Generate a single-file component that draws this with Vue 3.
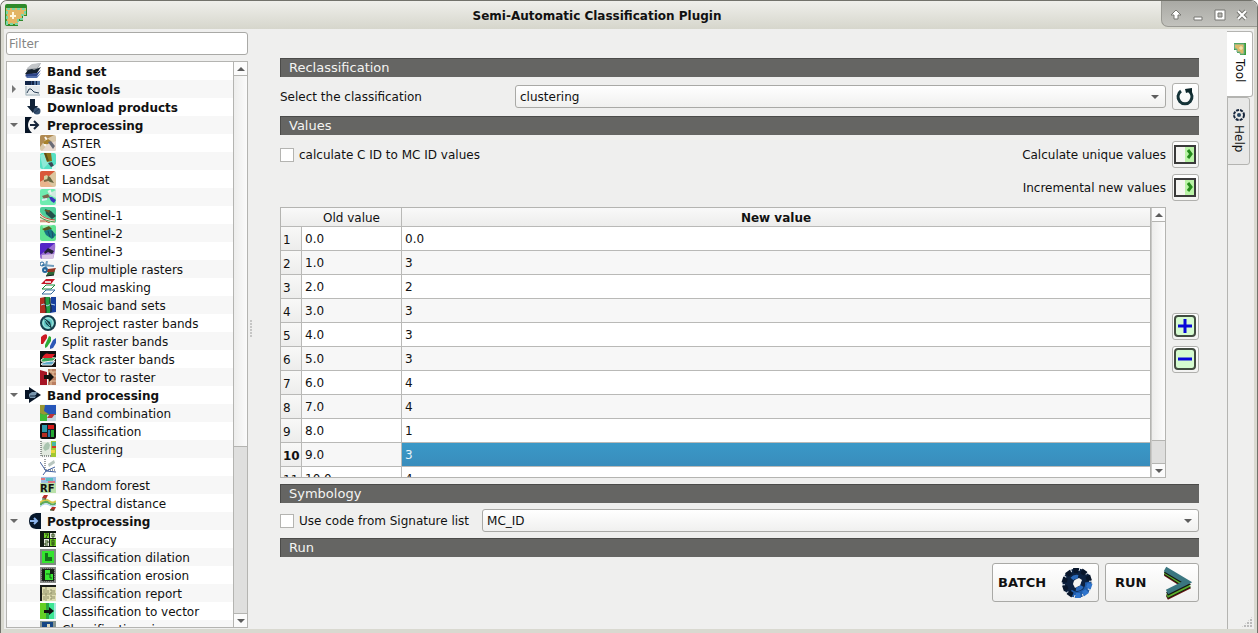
<script setup>
import { ref, computed } from 'vue'

const glyphs = {
  bandset: '<path d="M1 7L6 2L16 0L12 7L3 9Z" fill="#8f9499"/><path d="M2 5L7 1L16 0L12 5L4 6Z" fill="#c3c6c9"/><path d="M0 11L3 7L7 6L9 7L16 4L12 10L2 12Z" fill="#14202e"/><path d="M0 13L2 11L12 10L16 7L12 13L2 14Z" fill="#2c4488"/><path d="M1 15L3 13L12 13L16 10L12 15Z" fill="#5470ad"/>',
  basic: '<path d="M0 0H15V4H0Z" fill="#122447"/><path d="M9 0H11V4H9Z" fill="#4a6a96"/><path d="M6 0H7V4H6Z" fill="#34517c"/><path d="M12 0H15V4H12Z" fill="#5b7ba6"/><path d="M0 5H15V15H0Z" fill="#e6ebee"/><path d="M1 5V14H15" fill="none" stroke="#9fb0b8"/><path d="M2 12L4 8L6 8L9 11L14 12" fill="none" stroke="#2b4056"/>',
  download: '<path d="M5 0H10V7H13L8 14L2 7H5Z" fill="#112338"/><circle cx="12" cy="12" r="3.5" fill="#35506f"/><path d="M9 14L14 10" stroke="#1b3150"/>',
  preprocess: '<path d="M0 0H7Q3 4 3 8T7 16H0Z" fill="#071426"/><path d="M5 8H12M9 4L13 8L9 12" fill="none" stroke="#16253a" stroke-width="2"/>',
  bandproc: '<path d="M0 3H4V0L16 8L4 16V12H0Z" fill="#071426"/><path d="M4 7L7 5H12L10 11H5L4 9Z" fill="#7895ad"/><path d="M5 9H10L12 7" fill="none" stroke="#172b42"/>',
  postprocess: '<path d="M16 0V16H11Q4 15 4 8T11 0Z" fill="#07182c"/><path d="M5 8H12M9 5L12 8L9 11" fill="none" stroke="#8cb5ed" stroke-width="2"/>',
  aster: '<rect width="16" height="16" rx="2" fill="#d9c8aa"/><path d="M0 2Q0 0 2 0H14L5 5L0 12Z" fill="#b08a52"/><path d="M2 16L8 9L16 6V14Q16 16 14 16Z" fill="#e9d9cf"/><path d="M5 2L7 5M4 9L6 11" stroke="#f8f5ee" stroke-width="2"/><path d="M3 7L8 4L11 6L8 9L4 9Z" fill="#a8822d"/><path d="M8 7L11 6L15 11L13 14Z" fill="#6a6c76"/>',
  goes: '<rect width="16" height="16" rx="2" fill="#57e0c3"/><path d="M0 2L6 0L9 10L3 16Z" fill="#8ee9d6"/><path d="M4 0H11L12 8L7 9Z" fill="#8d7018"/><path d="M5 0L8 8" stroke="#5d4d16" stroke-width="2"/><path d="M8 10L12 9L14 13L11 14Z" fill="#3c4554"/><path d="M12 14L16 11V16H12Z" fill="#e8f5f2"/>',
  landsat: '<rect width="16" height="16" rx="2" fill="#dcc6a0"/><path d="M0 2Q0 0 2 0H15L8 6L0 11Z" fill="#d9593a"/><path d="M0 11L6 9L13 16H2Q0 16 0 14Z" fill="#eab48d"/><path d="M4 5L7 4L9 7L8 10L4 9Z" fill="#d4d3a2"/><path d="M8 5L10 6L14 12L10 11L7 9Z" fill="#66663f"/><path d="M4 10L8 9" stroke="#786842" stroke-width="2"/>',
  modis: '<rect width="16" height="16" rx="2" fill="#6fecb0"/><path d="M8 5L16 1V9Z" fill="#cfeadf"/><path d="M2 7L8 5L10 8L4 10Z" fill="#7c684e"/><path d="M8 3L10 2L11 5" fill="none" stroke="#e8f2ed" stroke-width="2"/><path d="M9 8L12 8L16 11L14 14L11 12Z" fill="#3a35bd"/><path d="M2 11L7 10" stroke="#d9ecf2" stroke-width="2"/>',
  sentinel1: '<rect width="16" height="16" rx="2" fill="#4fcf9a"/><path d="M0 5Q3 11 15 13V16H0Z" fill="#efe3cc"/><path d="M0 7Q4 12 15 13M0 14Q6 13 10 16" fill="none" stroke="#b8503c"/><path d="M0 10Q5 14 15 15" fill="none" stroke="#4a9a4e"/><path d="M5 2L11 4L16 9L12 12L6 7Z" fill="#24504a"/><path d="M4 3L10 3L9 6Z" fill="#6a5a2a"/>',
  sentinel2: '<rect width="16" height="16" rx="2" fill="#5fe392"/><path d="M2 0H13L4 5Z" fill="#98f0b6"/><path d="M2 4L9 1L12 4L5 6Z" fill="#58581e"/><path d="M4 6L11 4L16 10L12 14L6 10Z" fill="#167683"/><path d="M8 6L10 12M12 6L13 13" stroke="#1b4e68"/>',
  sentinel3: '<path d="M2 0H15Q16 7 13 16H2Q0 16 0 14V2Q0 0 2 0Z" fill="#9a6fd2"/><path d="M2 0H15L9 5L0 12V2Q0 0 2 0Z" fill="#5426c6"/><path d="M2 12L14 11L13 16H2Z" fill="#d8c4e4"/><path d="M4 9L8 5L14 8L12 11L8 9L5 11Z" fill="#242238"/>',
  clip: '<path d="M2 4L14 5M7 0L5 9" stroke="#6f9cbd" stroke-width="2"/><circle cx="2" cy="3" r="2" fill="none" stroke="#24669b"/><circle cx="5" cy="9" r="2" fill="none" stroke="#24669b" stroke-width="2"/><path d="M8 11L15 9L14 14L6 15Z" fill="#2b6838"/><path d="M8 8L16 7L14 11H7Z" fill="#953423"/><path d="M6 15L14 14" stroke="#131c20"/>',
  cloud: '<path d="M1 5L6 0H15L11 5Z" fill="#c51627"/><path d="M5 3H11" stroke="#f0ced0" stroke-width="2"/><path d="M2 10L6 6H15L11 10Z" fill="#fff" stroke="#188a3b"/><path d="M2 15L6 11H15L11 15Z" fill="#fff" stroke="#366c9b"/>',
  mosaic: '<path d="M0 1L5 0L6 6V16H0Z" fill="#b22d22"/><path d="M5 0H10L11 16H6Z" fill="#229e44"/><path d="M11 0H16V15L10 16Z" fill="#163e9d"/><path d="M1 8L4 7L7 9L11 7L15 8" stroke="#b4d7ee" fill="none"/><path d="M5 0V6L6 12V16M10 1V6L11 10V15" stroke="#1a231c" fill="none"/>',
  reproject: '<circle cx="8" cy="8" r="7" fill="#61c7c5" stroke="#173d4b" stroke-width="2"/><circle cx="8" cy="8" r="5" fill="none" stroke="#ade9de"/><path d="M4 3L10 7L12 14L6 9Z" fill="#123943"/><path d="M5 5L10 11" stroke="#6bd4cd"/>',
  split: '<path d="M1 4Q5 0 7 2V5L3 11H1Z" fill="#cc1823"/><path d="M5 12L9 3L11 4V8L7 14L5 15Z" fill="#2dab38"/><path d="M10 13L13 7L16 5V10L13 15L10 16Z" fill="#2c57b6"/>',
  stack: '<rect width="16" height="16" fill="#111"/><path d="M1 9L5 6L16 7L12 11H2Z" fill="#39a65a" stroke="#e4eddb"/><path d="M2 7Q5 1 9 3H15L12 7H2Z" fill="#df1d25"/><path d="M1 13Q5 10 15 10L12 14H2Z" fill="#5ba7c9" stroke="#eee"/>',
  vector: '<path d="M0 1L7 3V16H0Z" fill="#a61525"/><path d="M8 0H16V16H8Z" fill="#bb8063"/><path d="M8 3H16M8 7H16M8 12H16M11 0V3M13 3V7M11 12V16" stroke="#e7c49f"/><path d="M4 6H9V3L14 8L9 13V10H4Z" fill="#101010"/>',
  combination: '<rect width="16" height="16" fill="#4a9740"/><path d="M0 0H5V4L11 7L4 10L0 8Z" fill="#989733"/><path d="M5 0H16V9L10 10L4 6Z" fill="#2656b9"/><path d="M0 9L7 10V16H0Z" fill="#40bb36"/><path d="M7 10H16V16H7Z" fill="#c3d5df"/><path d="M7 13L10 9H15L12 13Z" fill="#bc343b"/>',
  classification: '<rect x="1" y="1" width="14" height="14" rx="1" fill="#132228" stroke="#111" stroke-width="2"/><path d="M2 2H7V9H2Z" fill="#2e9aa8"/><path d="M8 2H14V6H8Z" fill="#d61919"/><path d="M2 10H7V14H2Z" fill="#b82e22"/><path d="M8 7H10V14H8Z" fill="#2976a9"/><path d="M11 7H14V14H11Z" fill="#26a933"/>',
  clustering: '<rect x="1" y="1" width="14" height="14" fill="#e1e9df"/><path d="M1 0V15H12" fill="none" stroke="#313b36" stroke-dasharray="1 1"/><path d="M5 3L8 1L10 4L9 8L5 10L3 7Z" fill="#a9c4b0"/><path d="M11 0H16V16H11Z" fill="#a2c831"/><path d="M12 1H16V5H12Z" fill="#47b7a3"/><path d="M12 5H16V7H12Z" fill="#d23e27"/><path d="M11 9H15V12H11Z" fill="#ecd742"/>',
  pca: '<path d="M5 0V11H16" fill="none" stroke="#3e464d" stroke-dasharray="1 1"/><path d="M0 3L6 12L15 8M6 12L3 16M6 12L16 13" fill="none" stroke="#405f9e"/><path d="M8 5L14 1L15 4L9 8Z" fill="#b8c6bf"/>',
  forest: '<path d="M1 0H16V7H1Z" fill="#9abee3"/><path d="M1 1H5V3H1ZM8 4H15V6H8Z" fill="#df7680"/><path d="M6 1H13V4H6Z" fill="#58bec2"/><path d="M0 6H16V16H0Z" fill="#b9e0a8"/><text x="0" y="15" font-family="DejaVu Sans" font-size="10" font-weight="bold" fill="#111">RF</text>',
  spectral: '<path d="M0 8Q5 3 9 6T16 6" fill="none" stroke="#d9c94d" stroke-width="2"/><path d="M0 10Q5 5 9 8T16 8" fill="none" stroke="#5daa5b" stroke-width="2"/><path d="M0 12Q5 7 9 10T16 10" fill="none" stroke="#9ecbed"/><path d="M2 3L4 0H8L6 4ZM10 15L12 12H16L14 16Z" fill="#b63029"/><path d="M2 4H6M10 15H14" stroke="#275a32"/>',
  accuracy: '<rect width="16" height="16" fill="#121b13"/><path d="M4 2H9V7H4ZM10 8H16V15H10Z" fill="#72d12a"/><path d="M10 2H16V7H10ZM4 8H9V15H4Z" fill="#e6eadf"/><path d="M5 3H8L6 7M12 3H14V6H12ZM5 10H8V12H5V14H8M12 9H14V14H12ZM12 12H14" fill="none" stroke="#294912"/>',
  dilation: '<rect width="16" height="16" fill="#818b84"/><path d="M2 2H14V14H2Z" fill="#34e52e"/><path d="M5 4H8V8H12V12H5Z" fill="#14721b"/>',
  erosion: '<rect width="16" height="16" fill="#8b8d8a"/><path d="M2 2H14V14H2Z" fill="#152015"/><path d="M5 3H10V7H13V13H5Z" fill="#39ea32"/><path d="M6 7H10V11H12" fill="none" stroke="#105d16"/><path d="M2 2H14V14H2Z" fill="none" stroke="#222" stroke-dasharray="1 1"/>',
  report: '<rect width="16" height="16" fill="#deddb0"/><path d="M0 1H16M1 0V16" stroke="#191d18" stroke-width="2"/><path d="M2 9H16M6 2V16" stroke="#95966c"/><path d="M4 4V8M4 11V15M8 5V8M8 11V14M10 5H12V8H10M14 5V8M10 11H12V14H10M14 11V14" fill="none" stroke="#8e8f68"/>',
  tovector: '<rect width="16" height="16" fill="#29a743"/><path d="M0 0H6V16H0Z" fill="#65cf24"/><path d="M9 0H16V16H9Z" fill="#3de693"/><path d="M14 0H16V16H14Z" fill="#a2eadd"/><path d="M4 7H9V4L14 8L9 12V10H4Z" fill="#111"/>',
  sieve: '<rect width="16" height="16" fill="#879590"/><path d="M2 1H13V12H2Z" fill="#164785"/><path d="M7 3H10V7H14V12H7Z" fill="#dedabe"/>'
}

const tree = [
  { label: 'Band set', icon: 'bandset' },
  { label: 'Basic tools', icon: 'basic', arrow: 'closed' },
  { label: 'Download products', icon: 'download' },
  {
    label: 'Preprocessing', icon: 'preprocess', arrow: 'open', children: [
      ['ASTER', 'aster'], ['GOES', 'goes'], ['Landsat', 'landsat'], ['MODIS', 'modis'],
      ['Sentinel-1', 'sentinel1'], ['Sentinel-2', 'sentinel2'], ['Sentinel-3', 'sentinel3'],
      ['Clip multiple rasters', 'clip'], ['Cloud masking', 'cloud'], ['Mosaic band sets', 'mosaic'],
      ['Reproject raster bands', 'reproject'], ['Split raster bands', 'split'],
      ['Stack raster bands', 'stack'], ['Vector to raster', 'vector']
    ]
  },
  {
    label: 'Band processing', icon: 'bandproc', arrow: 'open', children: [
      ['Band combination', 'combination'], ['Classification', 'classification'],
      ['Clustering', 'clustering'], ['PCA', 'pca'], ['Random forest', 'forest'],
      ['Spectral distance', 'spectral']
    ]
  },
  {
    label: 'Postprocessing', icon: 'postprocess', arrow: 'open', children: [
      ['Accuracy', 'accuracy'], ['Classification dilation', 'dilation'],
      ['Classification erosion', 'erosion'], ['Classification report', 'report'],
      ['Classification to vector', 'tovector'], ['Classification sieve', 'sieve']
    ]
  }
]

const filter = ref('')
const treeRows = computed(() => {
  const q = filter.value.toLowerCase()
  const rows = []
  for (const group of tree) {
    const kids = (group.children || []).filter(([label]) => label.toLowerCase().includes(q))
    if (kids.length || group.label.toLowerCase().includes(q)) {
      rows.push({ ...group, top: true })
      for (const [label, icon] of kids) rows.push({ label, icon, top: false })
    }
  }
  return rows
})

const values = ref([
  ['0.0', '0.0'], ['1.0', '3'], ['2.0', '2'], ['3.0', '3'], ['4.0', '3'], ['5.0', '3'],
  ['6.0', '4'], ['7.0', '4'], ['8.0', '1'], ['9.0', '3'], ['10.0', '4']
])
const selected = ref(9)
const useIds = ref(false)
const useCode = ref(false)
const raster = ref('clustering')
const code = ref('MC_ID')

const blocks = Array.from({ length: 10 }, (_, i) => i * 36)
</script>

<template>
  <div class="window">
    <header class="titlebar">
      <svg class="logo" viewBox="0 0 22 22">
        <path d="M0 2Q0 0 2 0H20Q22 0 22 2V12H18V17H13V22H2Q0 22 0 20Z" fill="#2f8a2a" />
        <path d="M1 4H21V11H17V15H13V20H2Z" fill="#e3b565" />
        <path d="M2 20V5H20V11H17V15H13V20Z" fill="none" stroke="#79d6a5" stroke-width="2" stroke-dasharray="3 2" />
        <path d="M8 8V15M5 12H11" stroke="#fff6dc" stroke-width="2" />
      </svg>
      <h1 class="title">Semi-Automatic Classification Plugin</h1>
      <div class="controls">
        <button type="button" aria-label="Keep above">
          <svg viewBox="0 0 12 12"><path d="M6 1L11 6H8V10H4V6H1Z" class="outline" /></svg>
        </button>
        <button type="button" aria-label="Minimize">
          <svg viewBox="0 0 12 12"><path d="M2 8H10V11H2Z" class="outline" /></svg>
        </button>
        <button type="button" aria-label="Maximize">
          <svg viewBox="0 0 12 12"><path d="M1 1H11V11H1ZM4 4V8H8V4Z" class="outline" fill-rule="evenodd" /></svg>
        </button>
        <button type="button" aria-label="Close">
          <svg viewBox="0 0 12 12">
            <path d="M2 2L10 10M10 2L2 10" stroke="#777772" stroke-width="4" />
            <path d="M2 2L10 10M10 2L2 10" stroke="#fff" stroke-width="2" />
          </svg>
        </button>
      </div>
    </header>

    <div class="body">
      <aside class="sidebar">
        <input v-model="filter" class="filter" type="text" placeholder="Filter" aria-label="Filter">
        <div class="tree">
          <ul class="rows">
            <li v-for="row in treeRows" :key="row.label" :class="['node', { top: row.top }]">
              <span class="expander">
                <svg v-if="row.arrow === 'closed'" viewBox="0 0 8 8"><path d="M2 0L6 4L2 8Z" fill="#777" /></svg>
                <svg v-if="row.arrow === 'open'" viewBox="0 0 8 8"><path d="M0 2H8L4 6Z" fill="#6a6a6a" /></svg>
              </span>
              <svg class="icon" viewBox="0 0 16 16" v-html="glyphs[row.icon]"></svg>
              <span class="name">{{ row.label }}</span>
            </li>
          </ul>
          <div class="scroll">
            <span class="step up"><svg viewBox="0 0 8 4"><path d="M0 4L4 0L8 4Z" /></svg></span>
            <span class="track tree-track"><span class="thumb"></span></span>
            <span class="step down"><svg viewBox="0 0 8 4"><path d="M0 0H8L4 4Z" /></svg></span>
          </div>
        </div>
      </aside>

      <div class="splitter"><span class="dots"></span></div>

      <main class="panel">
        <h2 class="section">Reclassification</h2>
        <div class="line">
          <label class="wide-label" for="raster">Select the classification</label>
          <span class="combo">
            <select id="raster" v-model="raster"><option>clustering</option></select>
            <svg viewBox="0 0 8 4"><path d="M0 0H8L4 4Z" /></svg>
          </span>
          <button type="button" class="tool" aria-label="Refresh list">
            <svg class="refresh" viewBox="0 0 23 23">
              <path d="M7 6A7 7 0 1 0 15 6" fill="none" stroke="#153338" stroke-width="3" />
              <path d="M11 4L18 3V10L15 7L12 8Z" fill="#0b2529" />
            </svg>
          </button>
        </div>

        <h2 class="section">Values</h2>
        <div class="line">
          <label class="check"><input v-model="useIds" type="checkbox">calculate C ID to MC ID values</label>
          <span class="spacer"></span>
          <label for="unique">Calculate unique values</label>
          <button id="unique" type="button" class="tool">
            <svg viewBox="0 0 22 22">
              <path d="M1 3H21V20H1Z" fill="#f5f5f2" stroke="#8a8a88" stroke-width="1" />
              <path d="M11 3H20V19H11Z" fill="#b9f3a6" />
              <path d="M1 2V21M0 3H22M0 20H22M21 4V19" fill="none" stroke="#3a3a3a" stroke-width="2" />
              <path d="M14 7L17 11L14 15" fill="none" stroke="#258b1c" stroke-width="3" />
            </svg>
          </button>
        </div>
        <div class="line">
          <span class="spacer"></span>
          <label for="increment">Incremental new values</label>
          <button id="increment" type="button" class="tool">
            <svg viewBox="0 0 22 22">
              <path d="M1 3H21V20H1Z" fill="#f5f5f2" stroke="#8a8a88" stroke-width="1" />
              <path d="M11 3H20V19H11Z" fill="#b9f3a6" />
              <path d="M1 2V21M0 3H22M0 20H22M21 4V19" fill="none" stroke="#3a3a3a" stroke-width="2" />
              <path d="M14 7L17 11L14 15" fill="none" stroke="#258b1c" stroke-width="3" />
            </svg>
          </button>
        </div>

        <div class="grid-area">
          <div class="grid">
            <div class="grid-view">
              <table>
                <colgroup><col class="c-num"><col class="c-old"><col></colgroup>
                <thead>
                  <tr><th class="corner"></th><th class="old">Old value</th><th class="new">New value</th></tr>
                </thead>
                <tbody>
                  <tr v-for="(v, i) in values" :key="i">
                    <th :class="{ current: i === selected }">{{ i + 1 }}</th>
                    <td>{{ v[0] }}</td>
                    <td :class="{ picked: i === selected }" @click="selected = i">{{ v[1] }}</td>
                  </tr>
                </tbody>
              </table>
            </div>
            <div class="scroll">
              <span class="step up"><svg viewBox="0 0 8 4"><path d="M0 4L4 0L8 4Z" /></svg></span>
              <span class="track grid-track"><span class="thumb"></span></span>
              <span class="step down"><svg viewBox="0 0 8 4"><path d="M0 0H8L4 4Z" /></svg></span>
            </div>
          </div>
          <div class="side-buttons">
            <button type="button" class="tool" aria-label="Add row">
              <svg viewBox="0 0 22 22">
                <rect x="1" y="1" width="20" height="20" rx="3" fill="#d5fbd0" stroke="#414b40" stroke-width="2" />
                <path d="M11 4V18M4 11H18" stroke="#0808d8" stroke-width="3" />
              </svg>
            </button>
            <button type="button" class="tool" aria-label="Remove row">
              <svg viewBox="0 0 22 22">
                <rect x="1" y="1" width="20" height="20" rx="3" fill="#d5fbd0" stroke="#414b40" stroke-width="2" />
                <path d="M4 11H18" stroke="#0808d8" stroke-width="3" />
              </svg>
            </button>
          </div>
        </div>

        <h2 class="section">Symbology</h2>
        <div class="line short">
          <label class="check"><input v-model="useCode" type="checkbox">Use code from Signature list</label>
          <span class="combo code">
            <select v-model="code" aria-label="Signature code"><option>MC_ID</option><option>C_ID</option></select>
            <svg viewBox="0 0 8 4"><path d="M0 0H8L4 4Z" /></svg>
          </span>
        </div>

        <h2 class="section">Run</h2>
        <div class="actions">
          <button type="button" class="action batch">
            BATCH
            <svg viewBox="0 0 32 32">
              <circle cx="16" cy="16" r="9" fill="none" stroke="#0c2140" stroke-width="11" />
              <path d="M9 25A11 11 0 0 0 27 15" fill="none" stroke="#1f5cab" stroke-width="6" />
              <path d="M11 12A6 6 0 0 1 17 10M15 22A6 6 0 0 0 21 19" fill="none" stroke="#2a68b8" stroke-width="4" />
              <g v-for="a in blocks" :key="a" :transform="`rotate(${a} 16 16)`">
                <path d="M12 1H18L17 6H13Z" :fill="a > 90 && a < 190 ? '#2f74cc' : '#07152a'" />
                <path d="M19 1L18 4" stroke="#dde3ea" />
              </g>
              <path d="M12 17L14 13L18 11L21 13L19 18L14 21Z" fill="#f4f4f2" />
            </svg>
          </button>
          <button type="button" class="action run">
            RUN
            <svg viewBox="0 0 32 34">
              <g fill="none" stroke-width="4">
                <path d="M4 8L26 22L6 32" stroke="#6b1613" />
                <path d="M4 7L26 21L6 31" stroke="#151a12" />
                <path d="M4 6L26 20L6 30" stroke="#5fae2c" />
                <path d="M4 5L26 18L6 28" stroke="#151a12" />
                <path d="M4 3L26 16L6 26" stroke="#3a7680" stroke-width="5" />
              </g>
            </svg>
          </button>
        </div>
      </main>

      <nav class="tabs">
        <button type="button" class="tab active">
          <svg viewBox="0 0 12 12">
            <path d="M0 0H12V12H6V10H3V7H0Z" fill="#3d9e38" />
            <path d="M0 1H10V11H6V9H3V6H1Z" fill="#dfba68" stroke="#6caf91" />
            <path d="M7 3V7M5 5H9" stroke="#f7ebc0" />
          </svg>
          Tool
        </button>
        <button type="button" class="tab">
          <svg viewBox="0 0 12 12">
            <circle cx="6" cy="6" r="5" fill="none" stroke="#17263d" stroke-width="2" stroke-dasharray="3 1" />
            <circle cx="6" cy="6" r="2" fill="#27445f" />
          </svg>
          Help
        </button>
        <span class="grip"></span>
      </nav>
    </div>
  </div>
</template>

<style>
html { background: #fff; }
body { margin: 0; }
</style>

<style scoped>
* { box-sizing: border-box; }
.window {
  display: flex;
  flex-direction: column;
  height: 100vh;
  min-height: 480px;
  background: #efefee;
  border: solid #72726b;
  border-width: 1px 1px 0;
  border-radius: 7px 7px 0 0;
  overflow: hidden;
  font: 12px/18px "DejaVu Sans", sans-serif;
  color: #111;
}
button, input, select { font: inherit; color: inherit; }
button { cursor: pointer; }
svg { display: block; flex: none; }

.titlebar {
  display: flex;
  align-items: center;
  flex: none;
  height: 28px;
  background: linear-gradient(#efefeb, #d6d6cc);
}
.logo { width: 22px; height: 22px; margin: 0 4px; }
.title { flex: 1; margin: 0; padding: 2px 0 0 2px; font-size: 12px; font-weight: bold; text-align: center; }
.controls {
  display: flex;
  align-self: flex-start;
  align-items: center;
  height: 26px;
  padding: 2px 4px 0 3px;
  background: linear-gradient(#a9a9a4, #c2c2bd);
  border: solid #999993;
  border-width: 0 0 1px 1px;
  border-radius: 0 0 0 7px;
}
.controls button { display: grid; place-items: center; width: 22px; height: 24px; padding: 0; border: 0; background: none; }
.controls svg { width: 12px; height: 12px; }
.outline { fill: #fff; stroke: #777772; }

.body {
  display: flex;
  flex: 1;
  min-height: 0;
  border: solid #d9d9d0;
  border-width: 0 3px 4px;
}

.sidebar { display: flex; flex-direction: column; gap: 6px; width: 244px; padding: 3px 0 1px 2px; }
.filter {
  height: 23px;
  padding: 0 2px;
  border: 1px solid #a9a9a6;
  border-radius: 3px;
  background: #fff;
}
.filter::placeholder { color: #858585; opacity: 1; }
.tree { display: flex; flex: 1; min-height: 0; border: 1px solid #b4b4b1; background: #fff; }
.rows { flex: 1; margin: 0; padding: 0; list-style: none; overflow: hidden; }
.node { display: flex; align-items: center; height: 18px; white-space: nowrap; }
.node:nth-child(even) { background: #f7f7f7; }
.expander { display: flex; justify-content: center; width: 33px; }
.expander svg { width: 8px; height: 8px; }
.icon { width: 16px; height: 16px; }
.name { margin-left: 6px; padding-top: 2px; }
.top { font-weight: bold; }
.top .expander { width: 18px; padding-right: 4px; }

.scroll { display: flex; flex-direction: column; flex: none; width: 14px; border-left: 1px solid #b4b4b1; }
.step { display: grid; place-items: center; height: 14px; background: #fbfbfb; }
.step svg, .combo svg { width: 8px; height: 4px; fill: #5d5d5d; }
.up { border-bottom: 1px solid #b4b4b1; }
.down { border-top: 1px solid #b4b4b1; }
.track { flex: 1; background: #dfdfde; }
.thumb { display: block; background: linear-gradient(90deg, #ededec, #fbfbfb); border-bottom: 1px solid #b4b4b1; }
.tree-track .thumb { height: 69%; }
.grid-track .thumb { height: 91%; }

.splitter { display: grid; place-items: center; width: 7px; }
.dots { width: 3px; height: 18px; background: radial-gradient(circle at 1px 1px, #c6c6c5 1px, transparent 1px) 0 0 / 3px 3px; }

.panel { display: flex; flex: 1; flex-direction: column; gap: 6px; min-width: 0; padding: 29px 28px 27px 25px; }
.section {
  flex: none;
  margin: 0;
  padding: 0 8px;
  height: 19px;
  border: solid #4b4b49;
  border-width: 1px 0 0 1px;
  background: #656563;
  color: #f4f4f2;
  font-size: 13px;
  font-weight: normal;
  line-height: 18px;
}
.line { display: flex; flex: none; align-items: center; gap: 6px; height: 27px; }
.short { height: 23px; gap: 13px; }
.wide-label { flex: 0 0 229px; }
.spacer { flex: 1; }
.combo { position: relative; flex: 1; min-width: 0; }
.combo select {
  display: block;
  width: 100%;
  height: 23px;
  padding: 0 20px 0 4px;
  appearance: none;
  border: 1px solid #a9a9a6;
  border-radius: 3px;
  background: linear-gradient(#fff, #f0f0ef);
}
.combo svg { position: absolute; right: 7px; top: 10px; pointer-events: none; }
.check { display: flex; align-items: center; gap: 5px; }
.check input { width: 14px; height: 14px; margin: 0; appearance: none; border: 1px solid #b4b4b1; background: #fff; }
.check input:checked { background: #3b92bf; }
.tool {
  display: grid;
  place-items: start;
  width: 27px;
  height: 27px;
  padding: 1px;
  border: 1px solid #b0b0ad;
  border-radius: 3px;
  background: linear-gradient(#fff, #f3f3f2);
}
.tool svg { width: 22px; height: 22px; }
.tool .refresh { width: 23px; height: 23px; }

.grid-area { display: flex; flex: 1; gap: 6px; min-height: 0; }
.grid { display: flex; flex: 1; min-width: 0; border: 1px solid #b4b4b1; background: #fff; }
.grid-view { flex: 1; min-width: 0; overflow: hidden; border-right: 1px solid #b4b4b1; }
.grid .scroll { border-left-color: #c9c9c7; }
table { width: 100%; border-collapse: separate; border-spacing: 0; table-layout: fixed; }
.c-num { width: 21px; }
.c-old { width: 100px; }
th, td { padding: 0 0 0 3px; border: solid #b9b9b7; border-width: 0 1px 1px 0; text-align: left; font-weight: normal; }
th:last-child, td:last-child { border-right: 0; }
tbody th, td { height: 24px; }
tbody th { padding: 2px 0 0 2px; background: linear-gradient(#f8f8f7, #ededec); }
tbody .current { font-weight: bold; }
tbody tr:nth-child(even) td { background: #f7f7f7; }
tbody tr td.picked { background: linear-gradient(#3a98c7, #398dbc); color: #e8f3f9; }
thead th { height: 19px; padding: 0; line-height: 16px; padding-top: 2px; text-align: center; background: linear-gradient(#f9f9f9, #ededec); }
thead .corner { border-right: 0; }
thead .new { font-weight: bold; }
.side-buttons { display: flex; flex-direction: column; justify-content: center; gap: 6px; }

.actions { display: flex; flex: none; justify-content: flex-end; gap: 6px; }
.action {
  display: flex;
  align-items: center;
  justify-content: space-between;
  height: 39px;
  padding: 0 5px;
  border: 1px solid #a9a9a6;
  border-radius: 3px;
  background: linear-gradient(#fff, #f0f0ef);
  font-size: 13px;
  font-weight: bold;
}
.batch { width: 107px; }
.run { width: 94px; padding-left: 9px; }
.action svg { width: 32px; height: 34px; }

.tabs { position: relative; display: flex; flex: none; flex-direction: column; align-items: flex-start; width: 27px; padding-top: 2px; }
.tabs::before { content: ""; position: absolute; top: 67px; bottom: 0; left: 0; border-left: 1px solid #b4b4b1; }
.tab {
  display: flex;
  align-items: center;
  gap: 4px;
  width: 23px;
  height: 68px;
  padding: 11px 0;
  writing-mode: vertical-rl;
  border: 1px solid #b4b4b1;
  border-radius: 0 3px 3px 0;
  background: #e8e8e7;
}
.tab.active { width: 26px; height: 66px; border-left: 0; background: #fff; }
.tab svg { width: 12px; height: 12px; }
.grip {
  position: absolute;
  right: 1px;
  bottom: 1px;
  width: 12px;
  height: 12px;
  clip-path: polygon(100% 0, 100% 100%, 0 100%);
  background: radial-gradient(circle at 1px 1px, #bbb 1px, transparent 1px) 0 0 / 3px 3px;
}
</style>
